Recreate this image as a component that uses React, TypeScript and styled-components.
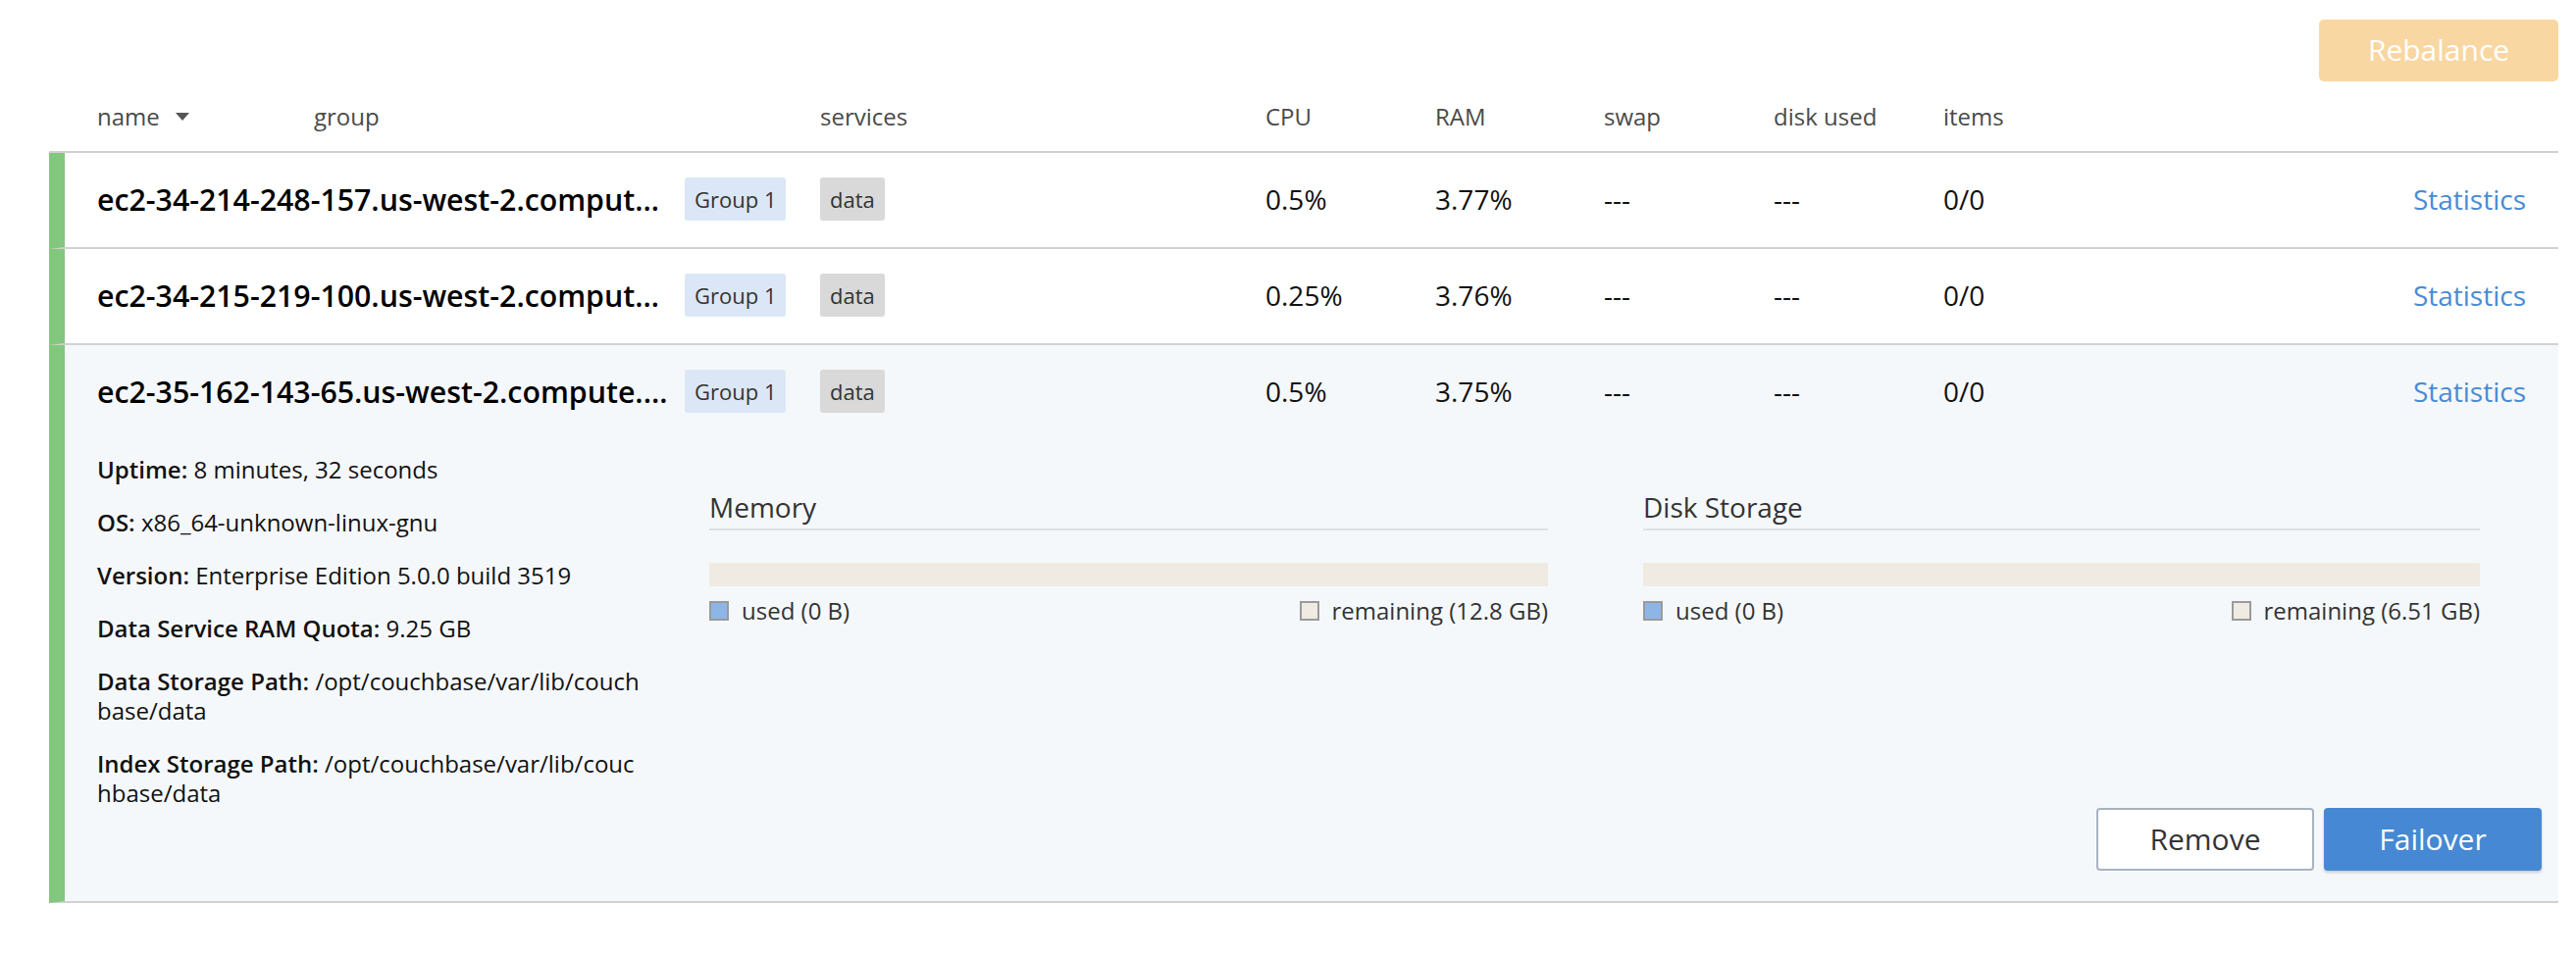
import React from "react";
import styled, { createGlobalStyle } from "styled-components";

const Global = createGlobalStyle`
  html, body { margin: 0; padding: 0; background: #ffffff; }
  body { font-family: "Open Sans", "Liberation Sans", sans-serif; color: #111; }
  * { box-sizing: border-box; }
`;

const Page = styled.div`
  width: 2626px;
  min-height: 974px;
  background: #fff;
`;

const Toolbar = styled.div`
  display: flex;
  justify-content: flex-end;
  padding: 20px 18px 0 50px;
`;

const RebalanceButton = styled.button`
  width: 244px;
  height: 63px;
  padding: 0 0 3px 0;
  border: none;
  border-radius: 5px;
  background: #f9d7a2;
  color: #ffffff;
  font-family: "Open Sans", sans-serif;
  font-size: 30px;
  cursor: default;
`;

const Table = styled.div`
  margin: 0 18px 0 50px;
`;

const HeaderRow = styled.div`
  display: flex;
  align-items: center;
  height: 73px;
  padding: 0 0 0 49px;
  border-bottom: 2px solid #d1d1d1;
`;

const HeadCell = styled.div<{ $w?: number }>`
  ${(p) => (p.$w ? `width: ${p.$w}px; flex: none;` : "flex: 1;")}
  display: flex;
  align-items: center;
  font-size: 24px;
  color: #4a4a4a;
`;

const SortCaret = styled.span`
  margin-left: 16px;
  width: 0;
  height: 0;
  border-left: 7px solid transparent;
  border-right: 7px solid transparent;
  border-top: 8px solid #555;
`;

const Row = styled.div<{ $expanded?: boolean }>`
  border-left: 16px solid #82c77d;
  border-bottom: 2px solid #d1d1d1;
  background: ${(p) => (p.$expanded ? "#f5f8fb" : "#ffffff")};
  padding: 0 17px 0 33px;
`;

const RowMain = styled.div`
  display: flex;
  align-items: center;
  height: 96px;
  padding-bottom: 2px;
`;

const Cell = styled.div<{ $w?: number }>`
  ${(p) => (p.$w ? `width: ${p.$w}px; flex: none;` : "flex: 1;")}
  font-size: 28px;
  color: #111;
  display: flex;
  align-items: center;
`;

const HostName = styled.div`
  width: 587px;
  flex: none;
  margin-right: 12px;
  font-size: 30.3px;
  font-weight: 600;
  color: #000;
  white-space: nowrap;
  overflow: hidden;
  text-overflow: ellipsis;
`;

const Badge = styled.span<{ $kind: "group" | "service" }>`
  display: inline-block;
  height: 44px;
  line-height: 44px;
  padding: 0 10px;
  border-radius: 3px;
  font-size: 22px;
  color: #333;
  background: ${(p) => (p.$kind === "group" ? "#dbe7f6" : "#d9d9d9")};
`;

const StatsLink = styled.a`
  font-size: 28px;
  color: #4a8ad4;
  text-decoration: none;
  padding-right: 16px;
  cursor: pointer;
`;

const Details = styled.div`
  padding: 16px 0 31px 0;
`;

const DetailsTop = styled.div`
  display: flex;
  align-items: flex-start;
`;

const InfoColumn = styled.div`
  width: 560px;
  flex: none;
  margin-right: 64px;
  display: flex;
  flex-direction: column;
  gap: 24px;
`;

const InfoLine = styled.div`
  font-size: 24px;
  line-height: 30px;
  color: #111;
  word-break: break-all;
`;

const InfoLabel = styled.strong`
  font-weight: 600;
  word-break: normal;
`;

const Panel = styled.div<{ $w: number; $gap?: number }>`
  width: ${(p) => p.$w}px;
  flex: none;
  margin-right: ${(p) => p.$gap ?? 0}px;
  padding-top: 34px;
`;

const PanelTitle = styled.div`
  font-size: 28px;
  line-height: 38px;
  color: #333;
  padding-bottom: 3px;
  border-bottom: 2px solid #dde1e6;
`;

const UsageBar = styled.div`
  margin-top: 33px;
  height: 24px;
  background: #efebe2;
  display: flex;
`;

const UsageFill = styled.div`
  height: 100%;
  background: #8db6e6;
`;

const Legend = styled.div`
  margin-top: 10px;
  display: flex;
  justify-content: space-between;
  align-items: center;
`;

const LegendItem = styled.div`
  display: flex;
  align-items: center;
  font-size: 24px;
  line-height: 30px;
  color: #333;
`;

const Swatch = styled.span<{ $color: string }>`
  width: 20px;
  height: 20px;
  margin-right: 13px;
  border: 2px solid #9a9a9a;
  background: ${(p) => p.$color};
`;

const Actions = styled.div`
  display: flex;
  justify-content: flex-end;
  gap: 10px;
`;

const ActionButton = styled.button<{ $primary?: boolean }>`
  width: 222px;
  height: 64px;
  padding: 0 0 2px 0;
  border-radius: 4px;
  font-family: "Open Sans", sans-serif;
  font-size: 30px;
  cursor: pointer;
  border: 2px solid ${(p) => (p.$primary ? "#4688d3" : "#a8b3c1")};
  background: ${(p) => (p.$primary ? "#4688d3" : "#ffffff")};
  color: ${(p) => (p.$primary ? "#ffffff" : "#333333")};
  box-shadow: ${(p) => (p.$primary ? "0 2px 3px rgba(0,0,0,0.18)" : "none")};
`;

type Node = {
  host: string;
  group: string;
  service: string;
  cpu: string;
  ram: string;
  swap: string;
  disk: string;
  items: string;
  expanded?: boolean;
};

const nodes: Node[] = [
  { host: "ec2-34-214-248-157.us-west-2.compute.amazonaws.com", group: "Group 1", service: "data", cpu: "0.5%", ram: "3.77%", swap: "---", disk: "---", items: "0/0" },
  { host: "ec2-34-215-219-100.us-west-2.compute.amazonaws.com", group: "Group 1", service: "data", cpu: "0.25%", ram: "3.76%", swap: "---", disk: "---", items: "0/0" },
  { host: "ec2-35-162-143-65.us-west-2.compute.amazonaws.com", group: "Group 1", service: "data", cpu: "0.5%", ram: "3.75%", swap: "---", disk: "---", items: "0/0", expanded: true },
];

const info: [string, string][] = [
  ["Uptime:", "8 minutes, 32 seconds"],
  ["OS:", "x86_64-unknown-linux-gnu"],
  ["Version:", "Enterprise Edition 5.0.0 build 3519"],
  ["Data Service RAM Quota:", "9.25 GB"],
  ["Data Storage Path:", "/opt/couchbase/var/lib/couchbase/data"],
  ["Index Storage Path:", "/opt/couchbase/var/lib/couchbase/data"],
];

const UsagePanel = ({ title, used, remaining, w, gap }: { title: string; used: string; remaining: string; w: number; gap?: number }) => (
  <Panel $w={w} $gap={gap}>
    <PanelTitle>{title}</PanelTitle>
    <UsageBar>
      <UsageFill style={{ width: "0%" }} />
    </UsageBar>
    <Legend>
      <LegendItem>
        <Swatch $color="#8db6e6" />
        used ({used})
      </LegendItem>
      <LegendItem>
        <Swatch $color="#efebe2" />
        remaining ({remaining})
      </LegendItem>
    </Legend>
  </Panel>
);

export default function App() {
  return (
    <Page>
      <Global />
      <Toolbar>
        <RebalanceButton>Rebalance</RebalanceButton>
      </Toolbar>
      <Table>
        <HeaderRow>
          <HeadCell $w={221}>
            name <SortCaret />
          </HeadCell>
          <HeadCell $w={516}>group</HeadCell>
          <HeadCell $w={454}>services</HeadCell>
          <HeadCell $w={173}>CPU</HeadCell>
          <HeadCell $w={172}>RAM</HeadCell>
          <HeadCell $w={173}>swap</HeadCell>
          <HeadCell $w={173}>disk used</HeadCell>
          <HeadCell>items</HeadCell>
        </HeaderRow>
        {nodes.map((n) => (
          <Row key={n.host} $expanded={n.expanded}>
            <RowMain>
              <HostName>{n.host}</HostName>
              <Cell $w={138}>
                <Badge $kind="group">{n.group}</Badge>
              </Cell>
              <Cell $w={454}>
                <Badge $kind="service">{n.service}</Badge>
              </Cell>
              <Cell $w={173}>{n.cpu}</Cell>
              <Cell $w={172}>{n.ram}</Cell>
              <Cell $w={173}>{n.swap}</Cell>
              <Cell $w={173}>{n.disk}</Cell>
              <Cell>{n.items}</Cell>
              <StatsLink>Statistics</StatsLink>
            </RowMain>
            {n.expanded && (
              <Details>
                <DetailsTop>
                  <InfoColumn>
                    {info.map(([k, v]) => (
                      <InfoLine key={k}>
                        <InfoLabel>{k}</InfoLabel> {v}
                      </InfoLine>
                    ))}
                  </InfoColumn>
                  <UsagePanel title="Memory" used="0 B" remaining="12.8 GB" w={855} gap={97} />
                  <UsagePanel title="Disk Storage" used="0 B" remaining="6.51 GB" w={853} />
                </DetailsTop>
                <Actions>
                  <ActionButton>Remove</ActionButton>
                  <ActionButton $primary>Failover</ActionButton>
                </Actions>
              </Details>
            )}
          </Row>
        ))}
      </Table>
    </Page>
  );
}
